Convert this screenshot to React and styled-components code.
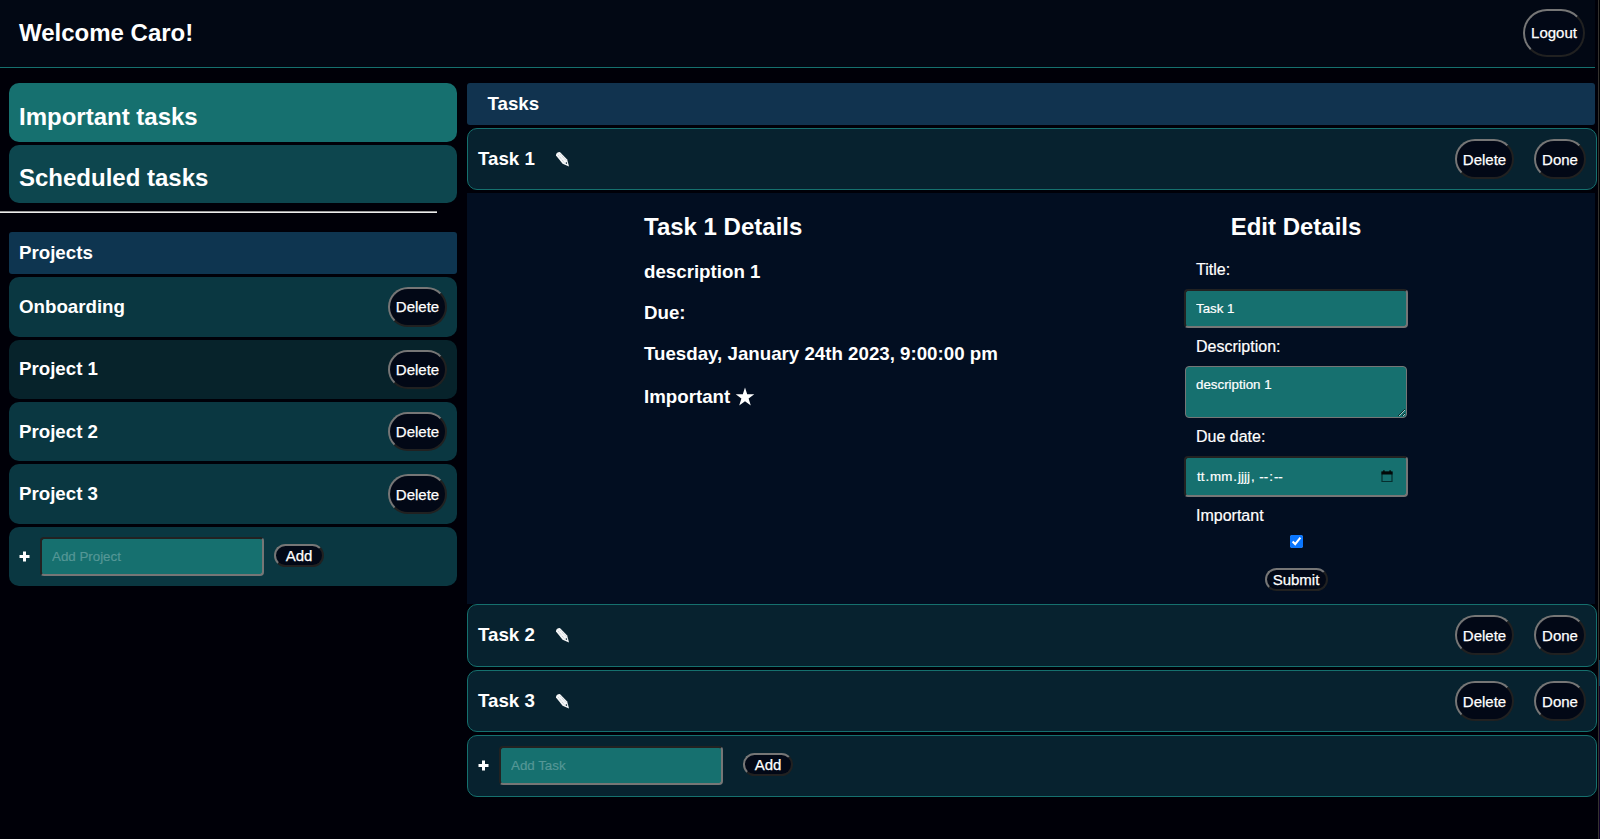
import React from "react";
import styled, { createGlobalStyle } from "styled-components";

const GlobalStyle = createGlobalStyle`
  * { box-sizing: border-box; }
  html, body { margin: 0; background: #000008; overflow: hidden; }
  body, button, input, textarea { font-family: "Liberation Sans", Arial, sans-serif; }
  h2, h3, p { margin: 0; }
`;

const Page = styled.div`
  display: flex;
  height: 839px;
  color: #fff;
`;

const Content = styled.div`
  width: 1598px;
  flex: none;
`;

const WindowEdge = styled.div`
  width: 2px;
  flex: none;
  border-left: 1px solid #34322f;
  background: linear-gradient(#020202 660px, #063a5c 660px, #063a5c 686px, #10002a 686px);
`;

const Header = styled.header`
  display: flex;
  align-items: flex-start;
  justify-content: space-between;
  width: 1595px;
  height: 68px;
  padding: 9px 10px 0 19px;
  border-bottom: 1px solid #15706e;
  background: #020814;
`;

const Heading = styled.h2`
  font-size: 24px;
  line-height: 28px;
  font-weight: bold;
`;

const Welcome = styled(Heading)`
  padding-top: 10px;
`;

const Button = styled.button`
  width: ${(p) => p.$w}px;
  height: ${(p) => p.$h || 40}px;
  flex: none;
  padding: 0 0 ${(p) => p.$lift || 0}px;
  border: 2px solid;
  border-color: #767676 #212121 #212121 #767676;
  border-radius: 24px;
  background: #020816;
  color: #fff;
  font-size: 15px;
  line-height: 17px;
  text-align: center;
  -webkit-text-stroke: 0.25px #fff;
`;

const Columns = styled.div`
  display: flex;
  padding-top: 15px;
`;

const Sidebar = styled.aside`
  width: 467px;
  flex: none;
`;

const Stack = styled.div`
  display: flex;
  flex-direction: column;
  gap: 3px;
  padding: 0 10px 0 9px;
`;

const Shortcut = styled.div`
  height: ${(p) => p.$h}px;
  padding: ${(p) => p.$top}px 10px 0;
  border-radius: 10px;
  background: ${(p) => p.$bg};
`;

const Divider = styled.hr`
  width: 437px;
  height: 2px;
  margin: 8px 0 19px;
  border: 0;
  border-top: 1px solid #9a9a9a;
  border-bottom: 1px solid #ededed;
`;

const SectionHeader = styled.div`
  width: ${(p) => p.$w}px;
  height: 42px;
  padding: 10px ${(p) => p.$pad}px 0;
  border-radius: 3px;
  background: ${(p) => p.$bg};
`;

const Label = styled.h3`
  font-size: 18.72px;
  line-height: 22px;
  font-weight: bold;
`;

const ProjectRow = styled.div`
  display: flex;
  align-items: flex-start;
  justify-content: space-between;
  height: ${(p) => p.$h || 59}px;
  padding: 10px;
  border-radius: 10px;
  background: ${(p) => (p.$active ? "#07232b" : "#0a3741")};

  ${Label} { padding-top: ${(p) => p.$text || 8}px; }
`;

const AddProject = styled(ProjectRow)`
  justify-content: flex-start;
`;

const Main = styled.main`
  width: 1130px;
  flex: none;
  display: flex;
  flex-direction: column;
`;

const TaskRow = styled.div`
  display: flex;
  align-items: flex-start;
  height: ${(p) => p.$h || 62}px;
  margin-top: ${(p) => (p.$flush ? 0 : 3)}px;
  padding: 10px 10px 0;
  border: 1px solid #15706e;
  border-radius: 10px;
  background: #07222f;

  ${Label} { width: 77px; padding-top: 9px; }
`;

const Pencil = styled.svg`
  flex: none;
  margin-top: 12px;
`;

const Actions = styled.div`
  display: flex;
  gap: 20px;
  margin-left: auto;
`;

const Plus = styled.svg`
  flex: none;
  margin: 14px 10px 0 0;
`;

const Field = styled.input`
  display: block;
  width: 224px;
  height: 39px;
  flex: none;
  padding: 1px 10px;
  border: 2px solid;
  border-color: #222 #767676 #767676 #222;
  border-radius: 4px;
  outline: none;
  background: #16706f;
  color: #fff;
  font-size: 13.333px;
  -webkit-text-stroke: 0.2px;

  &::placeholder { color: #559796; opacity: 1; }
`;

const AddButton = styled(Button)`
  margin: ${(p) => p.$top}px 0 0 ${(p) => p.$gap}px;
`;

const Details = styled.section`
  display: flex;
  width: 1128px;
  height: 411px;
  margin-top: 3px;
  background: #020e21;
`;

const Summary = styled.div`
  width: 717px;
  flex: none;
  padding: 20px 0 0 177px;
`;

const Info = styled(Label)`
  margin-top: ${(p) => p.$gap || 19}px;
`;

const StarLine = styled(Info)`
  display: flex;
  align-items: center;
  gap: 5px;
`;

const Form = styled.form`
  width: 224px;
  padding-top: 20px;
`;

const FormTitle = styled(Heading)`
  text-align: center;
`;

const FieldLabel = styled.label`
  display: block;
  height: 18px;
  margin: ${(p) => p.$m};
  padding-left: 12px;
  font-size: 16px;
  line-height: 18px;
  -webkit-text-stroke: 0.2px #fff;
`;

const Description = styled.textarea`
  display: block;
  width: 222px;
  height: 52px;
  margin-left: 1px;
  padding: 10px;
  border: 1px solid #767676;
  border-radius: 4px;
  outline: none;
  background: #16706f;
  color: #fff;
  font-size: 13.333px;
  line-height: 15px;
  -webkit-text-stroke: 0.2px;
`;

const DateField = styled.div`
  display: flex;
  align-items: center;
  width: 224px;
  height: 41px;
  padding: 0 13px 0 10px;
  border: 2px solid;
  border-color: #222 #767676 #767676 #222;
  border-radius: 4px;
  background: #16706f;
  font-size: 13.333px;
  white-space: pre;
  -webkit-text-stroke: 0.2px;

  svg { margin-left: auto; }
`;

const Segment = styled.span`
  padding: 0 1px;
`;

const Check = styled.input`
  display: block;
  width: 13px;
  height: 13px;
  margin: 10px auto 20px;
  accent-color: #0a76ff;
`;

const Submit = styled(Button)`
  display: block;
  margin: 0 auto;
`;

function PencilIcon() {
  return (
    <Pencil width="15" height="16" viewBox="0 0 15 16">
      <path d="M1 4.6 Q.9 1 4.9 1 L12.2 8.4 L14 15.4 L7.6 12.8 Z" fill="#f4f6f7" />
      <path d="M3.4 4.4 L9.2 11.4 M5.6 3.4 L11.2 9.6" stroke="#9aa5ac" strokeWidth=".7" strokeDasharray="1 1" />
      <circle cx="11.4" cy="12.1" r=".8" fill="#07222f" />
    </Pencil>
  );
}

function PlusIcon() {
  return (
    <Plus width="11" height="11" viewBox="0 0 11 11">
      <path d="M5.5 .5V10.5M.5 5.5H10.5" stroke="#fff" strokeWidth="3" />
    </Plus>
  );
}

function Task({ name, ...row }) {
  return (
    <TaskRow {...row}>
      <Label>{name}</Label>
      <PencilIcon />
      <Actions>
        <Button $w={59}>Delete</Button>
        <Button $w={52}>Done</Button>
      </Actions>
    </TaskRow>
  );
}

const projects = [
  { name: "Onboarding", h: 60, button: 40, text: 9, lift: 2 },
  { name: "Project 1", h: 59, button: 39, text: 8, active: true },
  { name: "Project 2", h: 59, button: 39, text: 9 },
  { name: "Project 3", h: 60, button: 40, text: 9 },
];

export default function App() {
  return (
    <Page>
      <GlobalStyle />
      <Content>
        <Header>
          <Welcome>Welcome Caro!</Welcome>
          <Button $w={62} $h={48} $lift={2}>Logout</Button>
        </Header>
        <Columns>
          <Sidebar>
            <Stack>
              <Shortcut $h={59} $top={20} $bg="#16706f"><Heading>Important tasks</Heading></Shortcut>
              <Shortcut $h={58} $top={19} $bg="#0d464e"><Heading>Scheduled tasks</Heading></Shortcut>
            </Stack>
            <Divider />
            <Stack>
              <SectionHeader $w={448} $pad={10} $bg="#0e3550"><Label>Projects</Label></SectionHeader>
              {projects.map((p) => (
                <ProjectRow key={p.name} $h={p.h} $text={p.text} $active={p.active}>
                  <Label>{p.name}</Label>
                  <Button $w={59} $h={p.button} $lift={p.lift}>Delete</Button>
                </ProjectRow>
              ))}
              <AddProject>
                <PlusIcon />
                <Field placeholder="Add Project" />
                <AddButton $w={50} $h={23} $top={7} $gap={10}>Add</AddButton>
              </AddProject>
            </Stack>
          </Sidebar>
          <Main>
            <SectionHeader $w={1128} $pad={20.5} $bg="#11334f"><Label>Tasks</Label></SectionHeader>
            <Task name="Task 1" />
            <Details>
              <Summary>
                <Heading>Task 1 Details</Heading>
                <Info $gap={20}>description 1</Info>
                <Info>Due:</Info>
                <Info>Tuesday, January 24th 2023, 9:00:00 pm</Info>
                <StarLine $gap={21}>
                  Important
                  <svg width="20" height="20" viewBox="0 0 20 20">
                    <path d="M10 .6 L12.2 7.3 H19.3 L13.6 11.5 L15.8 18.4 L10 14.2 L4.2 18.4 L6.4 11.5 L.7 7.3 H7.8 Z" fill="#fff" />
                  </svg>
                </StarLine>
              </Summary>
              <Form>
                <FormTitle>Edit Details</FormTitle>
                <FieldLabel $m="20px 0 10px">Title:</FieldLabel>
                <Field defaultValue="Task 1" />
                <FieldLabel $m="10px 0 10px">Description:</FieldLabel>
                <Description defaultValue="description 1" />
                <FieldLabel $m="10px 0 10px">Due date:</FieldLabel>
                <DateField>
                  <Segment>tt</Segment>.<Segment>mm</Segment>.<Segment>jjjj</Segment>, <Segment>--</Segment>:<Segment>--</Segment>
                  <svg width="12" height="13" viewBox="0 0 12 13">
                    <path d="M1 2h10v9.5H1z" fill="none" stroke="#062f2f" strokeWidth="1.2" />
                    <path d="M.5 1.5h11V4.5H.5zM2.2 .2h1.4v2H2.2zM8.4 .2h1.4v2H8.4z" fill="#020808" />
                  </svg>
                </DateField>
                <FieldLabel $m="10px 0 0">Important</FieldLabel>
                <Check type="checkbox" defaultChecked />
                <Submit type="button" $w={63} $h={23}>Submit</Submit>
              </Form>
            </Details>
            <Task name="Task 2" $h={63} $flush />
            <Task name="Task 3" />
            <TaskRow>
              <PlusIcon />
              <Field placeholder="Add Task" />
              <AddButton $w={50} $h={23} $top={7} $gap={20}>Add</AddButton>
            </TaskRow>
          </Main>
        </Columns>
      </Content>
      <WindowEdge />
    </Page>
  );
}
